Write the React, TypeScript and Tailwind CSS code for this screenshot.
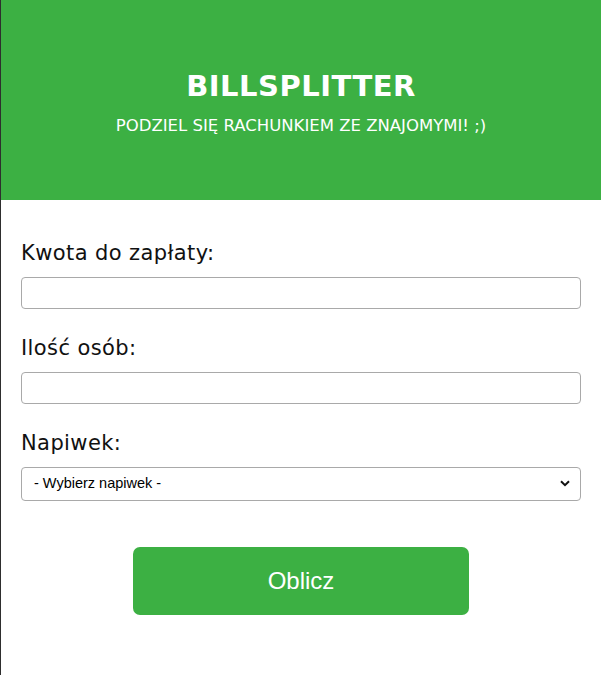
import { useState } from 'react'

const font = { fontFamily: '"DejaVu Sans", "Noto Sans", sans-serif' }

export default function App() {
  const [amount, setAmount] = useState('')
  const [people, setPeople] = useState('')
  const [tip, setTip] = useState('')

  return (
    <div className="min-h-[675px] w-[601px] border-l border-[#2e2e2e] bg-white" style={font}>
      {/* Header */}
      <header className="flex h-[200px] flex-col items-center bg-[#3cb043] pt-[66px] text-white">
        <h1 className="text-[29px] font-bold leading-[40px] tracking-[0.5px]">BILLSPLITTER</h1>
        <p className="mt-[9px] text-[16.5px] leading-[22px]">PODZIEL SIĘ RACHUNKIEM ZE ZNAJOMYMI! ;)</p>
      </header>

      {/* Form */}
      <form className="flex flex-col px-5 pt-[39px]" onSubmit={(e) => e.preventDefault()}>
        <label className="text-[21px] leading-[28px] tracking-[0.4px] text-[#111]" htmlFor="amount">
          Kwota do zapłaty:
        </label>
        <input
          id="amount"
          type="number"
          value={amount}
          onChange={(e) => setAmount(e.target.value)}
          className="mt-[10px] h-[32px] w-full rounded-[4px] border border-[#a9a9a9] px-2"
        />

        <label className="mt-[25px] text-[21px] leading-[28px] tracking-[0.4px] text-[#111]" htmlFor="people">
          Ilość osób:
        </label>
        <input
          id="people"
          type="number"
          value={people}
          onChange={(e) => setPeople(e.target.value)}
          className="mt-[10px] h-[32px] w-full rounded-[4px] border border-[#a9a9a9] px-2"
        />

        <label className="mt-[25px] text-[21px] leading-[28px] tracking-[0.4px] text-[#111]" htmlFor="tip">
          Napiwek:
        </label>
        <div className="relative mt-[10px]">
          <select
            id="tip"
            value={tip}
            onChange={(e) => setTip(e.target.value)}
            className="h-[34px] w-full appearance-none rounded-[4px] border border-[#a9a9a9] bg-white pl-[12px] text-[14.5px] text-black"
            style={{ fontFamily: '"Liberation Sans", Arial, sans-serif' }}
          >
            <option value="">- Wybierz napiwek -</option>
            <option value="0.05">5%</option>
            <option value="0.1">10%</option>
            <option value="0.15">15%</option>
          </select>
          <svg
            className="pointer-events-none absolute right-[11px] top-[13px]"
            width="10"
            height="7"
            viewBox="0 0 10 7"
          >
            <path d="M1 1.2 L5 5.2 L9 1.2" fill="none" stroke="#111" strokeWidth="2" />
          </svg>
        </div>

        <div className="flex justify-center pt-[46px]">
          <button
            type="submit"
            className="h-[68px] w-[336px] rounded-[7px] bg-[#3cb043] text-[24px] text-white"
            style={{ fontFamily: '"Liberation Sans", Arial, sans-serif' }}
          >
            Oblicz
          </button>
        </div>
      </form>
    </div>
  )
}
